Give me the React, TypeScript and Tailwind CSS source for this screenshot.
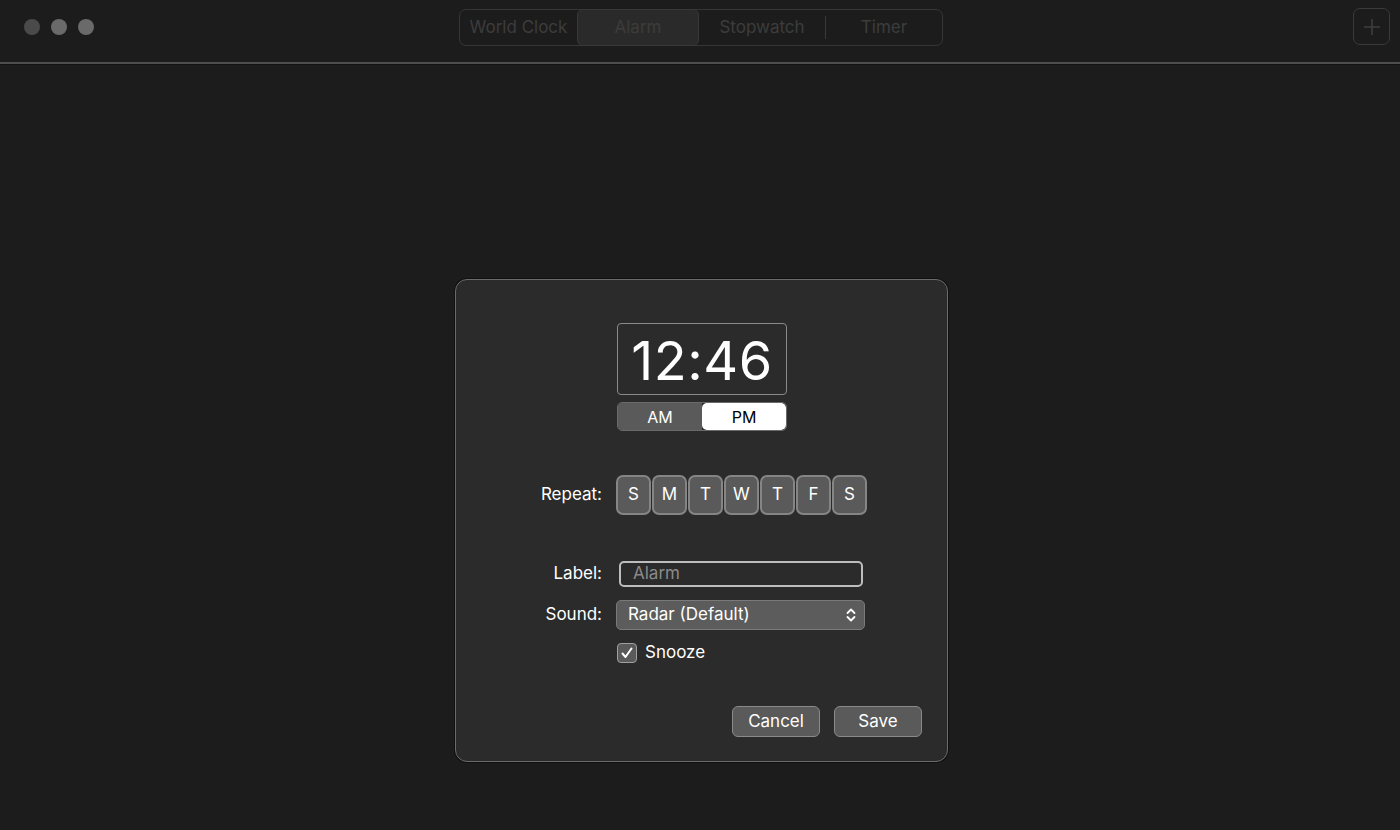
import React from "react";

const days = ["S", "M", "T", "W", "T", "F", "S"];

export default function App() {
  return (
    <div
      className="w-[1400px] h-[830px] bg-[#1c1c1c] flex flex-col overflow-hidden"
      style={{ fontFamily: "Inter, 'Noto Sans', sans-serif" }}
    >
      {/* Title bar */}
      <div className="h-[62px] shrink-0 grid grid-cols-[1fr_auto_1fr] items-start pt-[9px]">
        <div className="flex gap-[11px] items-center pl-[24px] pt-[10px]">
          <div className="w-[16px] h-[16px] rounded-full bg-[#4a4a4a]" />
          <div className="w-[16px] h-[16px] rounded-full bg-[#6a6a6a]" />
          <div className="w-[16px] h-[16px] rounded-full bg-[#6a6a6a]" />
        </div>
        <div className="flex h-[37px] w-[484px] ml-[2px] border border-[#363636] rounded-[7px] text-[17px] text-[#3c3c3c] items-stretch">
          <div className="w-[117px] flex items-center justify-center">World Clock</div>
          <div className="w-[122px] flex items-center justify-center bg-[#2a2a2a] border border-[#383838] rounded-[6px] -my-px">
            Alarm
          </div>
          <div className="w-[127px] flex items-center justify-center border-r border-[#3a3a3a] my-[6px]">Stopwatch</div>
          <div className="flex-1 flex items-center justify-center">Timer</div>
        </div>
        <div className="flex justify-end pr-[10px] -mt-[1px]">
          <div className="w-[37px] h-[37px] border border-[#3a3a3a] rounded-[7px] flex items-center justify-center">
            <svg width="20" height="20" viewBox="0 0 20 20" stroke="#3e3e3e" strokeWidth="1.6" fill="none">
              <path d="M10 2v16M2 10h16" />
            </svg>
          </div>
        </div>
      </div>
      <div className="h-[2px] bg-[#4e4e4e] shrink-0" />
      <div className="h-[1px] bg-[#121212] shrink-0" />

      {/* Main */}
      <div className="flex-1 flex justify-center pt-[214px] pl-[3px]">
        <div className="w-[493px] h-[483px] bg-[#2b2b2b] border border-[#6b6b6b] rounded-[12px] shadow-[0_0_0_1px_#101010] flex flex-col text-white">
          {/* Time */}
          <div className="flex flex-col items-center mt-[43px] pl-[1px]">
            <div className="w-[170px] h-[72px] border border-[#8a8a8a] rounded-[4px] flex items-center justify-center text-[54px] leading-none font-normal tracking-[0.5px] pt-[4px]">
              12:46
            </div>
            <div className="mt-[7px] w-[170px] h-[29px] flex rounded-[5px] overflow-hidden border border-[#6a6a6a] text-[16px]">
              <div className="flex-1 bg-[#5a5a5a] flex items-center justify-center text-white">AM</div>
              <div className="flex-1 bg-white flex items-center justify-center text-black rounded-[5px]">PM</div>
            </div>
          </div>

          {/* Repeat */}
          <div className="flex items-center mt-[44px] h-[40px]">
            <div className="w-[146px] text-right text-[17px]">Repeat:</div>
            <div className="flex gap-[1px] ml-[14px]">
              {days.map((d, i) => (
                <div
                  key={i}
                  className="w-[35px] h-[40px] bg-[#5a5a5a] border-2 border-[#858585] rounded-[7px] flex items-center justify-center text-[17px] text-white"
                >
                  {d}
                </div>
              ))}
            </div>
          </div>

          {/* Label */}
          <div className="flex items-center mt-[46px] h-[26px]">
            <div className="w-[146px] text-right text-[17px]">Label:</div>
            <div className="ml-[17px] w-[244px] h-[26px] border-2 border-[#bdbdbd] rounded-[5px] flex items-center px-[12px] text-[17px] text-[#8a8a8a]">
              Alarm
            </div>
          </div>

          {/* Sound */}
          <div className="flex items-center mt-[13px] h-[30px]">
            <div className="w-[146px] text-right text-[17px]">Sound:</div>
            <div className="ml-[14px] w-[249px] h-[30px] bg-[#5c5c5c] border border-[#7a7a7a] rounded-[5px] flex items-center pl-[11px] pr-[8px] text-[17px] text-white">
              <span className="flex-1">Radar (Default)</span>
              <svg width="10" height="16" viewBox="0 0 10 16" fill="none" stroke="#ffffff" strokeWidth="1.8" strokeLinecap="round" strokeLinejoin="round">
                <path d="M1.5 6L5 2.5L8.5 6" />
                <path d="M1.5 10L5 13.5L8.5 10" />
              </svg>
            </div>
          </div>

          {/* Snooze */}
          <div className="flex items-center mt-[13px] ml-[161px] h-[20px]">
            <div className="w-[20px] h-[20px] bg-[#5a5a5a] border border-[#a0a0a0] rounded-[4px] flex items-center justify-center">
              <svg width="14" height="14" viewBox="0 0 14 14" fill="none" stroke="#ffffff" strokeWidth="2" strokeLinecap="round" strokeLinejoin="round">
                <path d="M2.5 7.5L5.5 11L11.5 2.5" />
              </svg>
            </div>
            <span className="ml-[8px] text-[17px]">Snooze</span>
          </div>

          {/* Buttons */}
          <div className="flex justify-end gap-[14px] mt-[43px] mr-[25px]">
            <div className="w-[88px] h-[31px] bg-[#5a5a5a] border border-[#8a8a8a] rounded-[6px] flex items-center justify-center text-[17px]">
              Cancel
            </div>
            <div className="w-[88px] h-[31px] bg-[#5a5a5a] border border-[#8a8a8a] rounded-[6px] flex items-center justify-center text-[17px]">
              Save
            </div>
          </div>
        </div>
      </div>
    </div>
  );
}
